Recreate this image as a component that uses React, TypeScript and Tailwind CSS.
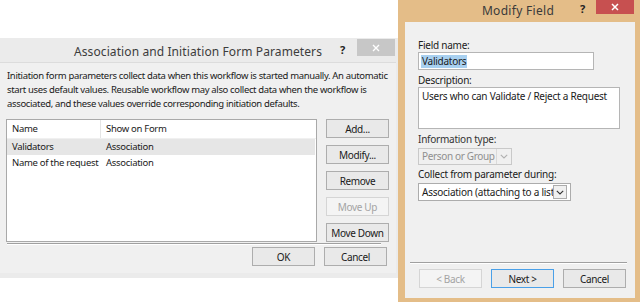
import React from "react";

const font = { fontFamily: '"Noto Sans", "Open Sans", sans-serif' };

function Btn({ children, disabled, primary, className = "" }: { children: React.ReactNode; disabled?: boolean; primary?: boolean; className?: string }) {
  return (
    <div
      className={
        "flex items-center justify-center h-[19px] w-[63px] border text-[10px] tracking-[-0.35px] leading-none " +
        (disabled
          ? "border-[#d5d5d5] bg-[#f4f4f4] text-[#a3a3a3] "
          : primary
          ? "border-[#4aa0e8] bg-[#e9e9e9] text-[#1a1a1a] "
          : "border-[#adadad] bg-[#e9e9e9] text-[#1a1a1a] ") +
        className
      }
    >
      {children}
    </div>
  );
}

function Chevron({ color = "#444" }: { color?: string }) {
  return (
    <svg width="8" height="5" viewBox="0 0 8 5">
      <path d="M0.8 0.8 L4 4 L7.2 0.8" fill="none" stroke={color} strokeWidth="1.1" />
    </svg>
  );
}

function LeftDialog() {
  return (
    <div className="absolute left-0 top-[38px] w-[398px] h-[240px] bg-[#ebebeb] flex flex-col">
      <div className="relative h-[24px] flex items-center justify-center">
        <span className="text-[12px] tracking-[0.1px] text-[#3c3c3c] mr-[2px] mt-[3px] whitespace-nowrap">Association and Initiation Form Parameters</span>
        <span className="absolute left-[340px] top-[4px] text-[11px] font-bold text-[#222]">?</span>
        <div className="absolute left-[357px] top-[1px] w-[38px] h-[17px] bg-[#c7c7c7] flex items-center justify-center">
          <svg width="8" height="8" viewBox="0 0 8 8">
            <path d="M1 1 L7 7 M7 1 L1 7" stroke="#fff" strokeWidth="1.4" />
          </svg>
        </div>
      </div>
      <div className="flex-1 mr-[2px] mb-[5px] bg-[#f0f0f0] border-t border-[#dcdcdc] flex flex-col pl-[6px] pt-[6px]">
        <div className="text-[9.5px] leading-[14px] text-[#1a1a1a] pl-[1px] tracking-[-0.35px] whitespace-nowrap">
          <div>Initiation form parameters collect data when this workflow is started manually. An automatic</div>
          <div>start uses default values. Reusable workflow may also collect data when the workflow is</div>
          <div>associated, and these values override corresponding initiation defaults.</div>
        </div>
        <div className="flex mt-[8px] gap-[9px]">
          <div className="w-[311px] h-[123px] bg-white border border-[#a9a9a9] text-[9.5px] text-[#1a1a1a] tracking-[-0.3px]">
            <div className="flex h-[19px] items-center border-b border-[#f0f0f0]">
              <div className="w-[94px] pl-[5px] border-r border-[#e5e5e5] h-full flex items-center">Name</div>
              <div className="pl-[5px]">Show on Form</div>
            </div>
            <div className="flex h-[16px] items-center bg-[#e6e6e6] mr-[1px]">
              <div className="w-[94px] pl-[5px]">Validators</div>
              <div className="pl-[5px]">Association</div>
            </div>
            <div className="flex h-[16px] items-center">
              <div className="w-[94px] pl-[5px] whitespace-nowrap">Name of the request</div>
              <div className="pl-[5px]">Association</div>
            </div>
          </div>
          <div className="flex flex-col gap-[7px]">
            <Btn>Add...</Btn>
            <Btn>Modify...</Btn>
            <Btn>Remove</Btn>
            <Btn disabled>Move Up</Btn>
            <Btn>Move Down</Btn>
          </div>
        </div>
        <div className="mt-[1px] ml-[1px] w-[374px] h-[2px] border-t border-[#a0a0a0] border-b border-b-white"></div>
        <div className="flex justify-end gap-[9px] mt-[2px] pr-[2px] w-[383px]">
          <Btn>OK</Btn>
          <Btn>Cancel</Btn>
        </div>
      </div>
    </div>
  );
}

function RightDialog() {
  return (
    <div className="absolute left-[398px] top-0 w-[242px] h-[302px] bg-[#e4bd88] flex flex-col">
      <div className="relative h-[22px] flex items-center justify-center">
        <span className="text-[12px] tracking-[0.3px] text-[#3a3a3a] mr-[2px]">Modify Field</span>
        <span className="absolute left-[182px] top-[1px] text-[11px] font-bold text-[#222]">?</span>
        <div className="absolute left-[198px] top-0 w-[38px] h-[14px] bg-[#c75050] flex items-center justify-center">
          <svg width="8" height="8" viewBox="0 0 8 8">
            <path d="M1 1 L7 7 M7 1 L1 7" stroke="#fff" strokeWidth="1.5" />
          </svg>
        </div>
      </div>
      <div className="ml-[7px] mr-[5px] mb-[4px] flex-1 bg-[#f0f0f0] flex flex-col pl-[13px] text-[10px] text-[#1a1a1a] tracking-[-0.25px]">
        <div className="mt-[16px] h-[14px] leading-[14px]">Field name:</div>
        <div className="w-[176px] h-[18px] bg-white border border-[#b5b5b5] flex items-center pl-[2px]">
          <span className="bg-[#a8d0f0] px-[1px] leading-[13px]">Validators</span>
        </div>
        <div className="mt-[3px] h-[14px] leading-[14px]">Description:</div>
        <div className="w-[202px] h-[42px] bg-white border border-[#b5b5b5] pl-[3px] pt-[1px] leading-[14px] whitespace-nowrap">
          Users who can Validate / Reject a Request
        </div>
        <div className="mt-[3px] h-[14px] leading-[14px] text-[#333]">Information type:</div>
        <div className="mt-[2px] w-[94px] h-[17px] border border-[#c9c9c9] bg-[#f0f0f0] flex items-center text-[#8f8f8f]">
          <span className="pl-[3px] flex-1 whitespace-nowrap tracking-[-0.35px]">Person or Group</span>
          <div className="w-[15px] h-full border-l border-[#dadada] flex items-center justify-center">
            <Chevron color="#b0b0b0" />
          </div>
        </div>
        <div className="mt-[2px] h-[14px] leading-[14px]">Collect from parameter during:</div>
        <div className="mt-[2px] w-[153px] h-[18px] border border-[#acacac] bg-white flex items-center">
          <span className="pl-[3px] w-[134px] whitespace-nowrap overflow-hidden">Association (attaching to a list</span>
          <div className="w-[14px] h-[14px] border border-[#acacac] bg-[#f0f0f0] flex items-center justify-center">
            <Chevron color="#333" />
          </div>
        </div>
        <div className="mt-auto -ml-[8px] w-[217px] h-[2px] border-t border-[#a0a0a0] border-b border-b-white"></div>
        <div className="flex gap-[9px] mt-[5px] mb-[10px] ml-[1px]">
          <Btn disabled>&lt; Back</Btn>
          <Btn primary>Next &gt;</Btn>
          <Btn>Cancel</Btn>
        </div>
      </div>
    </div>
  );
}

export default function App() {
  return (
    <div className="relative w-[640px] h-[307px] bg-white overflow-hidden" style={font}>
      <LeftDialog />
      <RightDialog />
    </div>
  );
}
